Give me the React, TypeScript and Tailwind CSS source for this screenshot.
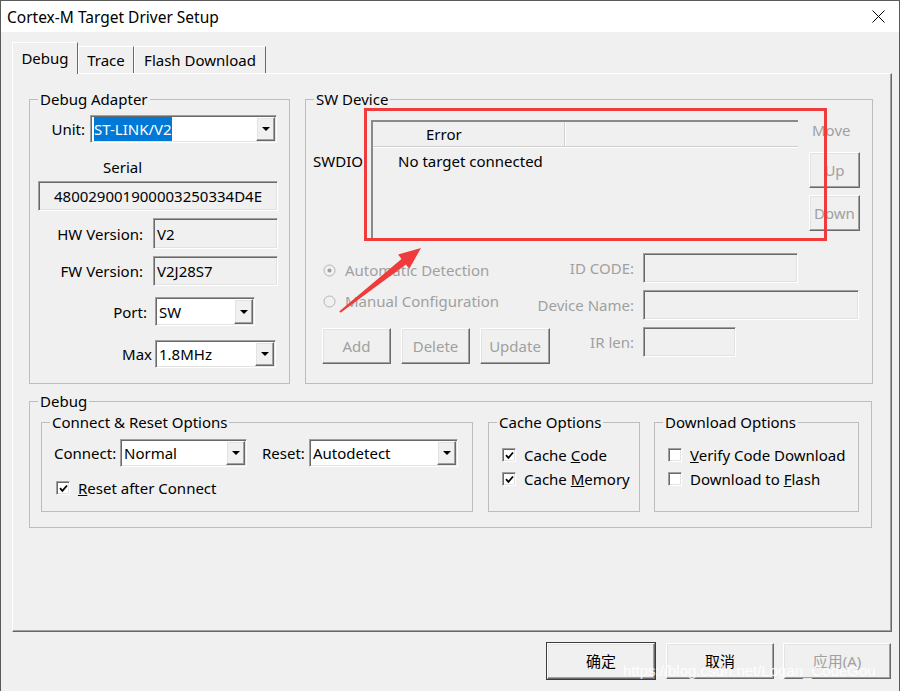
import React from 'react';

const sunken =
  'border border-t-[#a0a0a0] border-l-[#a0a0a0] border-r-white border-b-white shadow-[inset_1px_1px_0_#696969,inset_-1px_-1px_0_#e3e3e3]';
const raised =
  'border border-t-white border-l-white border-r-[#696969] border-b-[#696969] shadow-[inset_-1px_-1px_0_#a0a0a0,inset_1px_1px_0_#e3e3e3]';

const Arrow = () => (
  <svg width="8" height="4" viewBox="0 0 8 4">
    <path d="M0 0h8L4 4z" fill="#000" />
  </svg>
);

const Combo: React.FC<{ className: string; value: string; selected?: boolean }> = ({ className, value, selected }) => (
  <div className={`flex bg-white ${sunken} ${className}`}>
    <div className="flex flex-1 items-stretch py-[1px] pl-[3px]">
      {selected ? (
        <span className="flex items-center bg-[#0078d7] text-white">{value}</span>
      ) : (
        <span className="flex items-center">{value}</span>
      )}
    </div>
    <div className={`my-[1px] mr-[1px] flex w-[19px] items-center justify-center bg-[#f0f0f0] ${raised}`}>
      <Arrow />
    </div>
  </div>
);

const Field: React.FC<{ className: string; children?: React.ReactNode }> = ({ className, children }) => (
  <div className={`flex items-center bg-[#f0f0f0] ${sunken} ${className}`}>{children}</div>
);

const Group: React.FC<{ title: string; className: string; children?: React.ReactNode }> = ({ title, className, children }) => (
  <fieldset className={`border border-[#bdbdbd] ${className}`}>
    <legend className="ml-[8px] px-[2px] leading-[20px]">{title}</legend>
    {children}
  </fieldset>
);

const Check: React.FC<{ checked?: boolean }> = ({ checked }) => (
  <span className={`flex h-[14px] w-[14px] shrink-0 items-center justify-center bg-white ${sunken}`}>
    {checked && (
      <svg width="9" height="9" viewBox="0 0 9 9">
        <path d="M1 4.2l2.4 2.6L8 1.5" stroke="#000" strokeWidth="1.8" fill="none" />
      </svg>
    )}
  </span>
);

const Radio: React.FC<{ on?: boolean }> = ({ on }) => (
  <svg width="13" height="13" viewBox="0 0 13 13" className="shrink-0">
    <circle cx="6.5" cy="6.5" r="5.5" fill="#f0f0f0" stroke="#b4b4b4" />
    {on && <circle cx="6.5" cy="6.5" r="2" fill="#a0a0a0" />}
  </svg>
);

const Btn: React.FC<{ className: string; children: React.ReactNode; dim?: boolean }> = ({ className, children, dim }) => (
  <div className={`flex shrink-0 items-center justify-center bg-[#f0f0f0] ${raised} ${dim ? 'text-[#a0a0a0]' : ''} ${className}`}>
    {children}
  </div>
);

export default function App() {
  return (
    <div className="relative h-[691px] w-[900px] overflow-hidden border-x border-t border-[#5a5a5a] bg-[#f0f0f0] font-['Noto_Sans','Noto_Sans_CJK_SC',sans-serif] text-[15px] leading-[20px] text-black">
      {/* title bar */}
      <div className="flex h-[31px] items-center justify-between bg-white pl-[6px] pr-[14px]">
        <span className="text-[15.5px]">Cortex-M Target Driver Setup</span>
        <svg width="13" height="13" viewBox="0 0 13 13">
          <path d="M0.5 0.5l12 12M12.5 0.5l-12 12" stroke="#000" strokeWidth="1" />
        </svg>
      </div>

      <div className="pl-[11px] pt-[10px]">
        {/* tabs */}
        <div className="flex h-[31px] items-end">
          <div className="relative z-10 -mb-px flex h-[32px] w-[66px] items-center justify-center border-l border-t border-r border-l-white border-t-white border-r-[#696969] bg-[#f0f0f0] pb-[2px]">
            Debug
          </div>
          <div className="flex h-[27px] w-[56px] items-center justify-center border-l border-t border-r border-l-white border-t-white border-r-[#696969]">
            Trace
          </div>
          <div className="flex h-[27px] w-[132px] items-center justify-center border-l border-t border-r border-l-white border-t-white border-r-[#696969]">
            Flash Download
          </div>
        </div>

        {/* tab page */}
        <div className="h-[559px] w-[880px] border border-t-white border-l-white border-r-[#696969] border-b-[#696969] pl-[16px] pt-[15px] shadow-[inset_-1px_-1px_0_#a0a0a0]">
          <div className="flex gap-[15px]">
            <Group title="Debug Adapter" className="h-[295px] w-[261px]">
              <div className="mt-[6px] flex h-[28px] items-center">
                <span className="w-[55px] text-right">Unit:</span>
                <Combo className="ml-[5px] h-[28px] w-[187px]" value="ST-LINK/V2" selected />
              </div>
              <div className="ml-[73px] mt-[14px]">Serial</div>
              <Field className="ml-[8px] mt-[4px] h-[30px] w-[240px] justify-center">480029001900003250334D4E</Field>
              <div className="mt-[7px] flex items-center">
                <span className="w-[113px] text-right">HW Version:</span>
                <Field className="ml-[10px] h-[31px] w-[125px] pl-[3px]">V2</Field>
              </div>
              <div className="mt-[7px] flex items-center">
                <span className="w-[113px] text-right">FW Version:</span>
                <Field className="ml-[10px] h-[30px] w-[125px] pl-[3px]">V2J28S7</Field>
              </div>
              <div className="mt-[11px] flex items-center">
                <span className="w-[117px] text-right">Port:</span>
                <Combo className="ml-[8px] h-[29px] w-[100px]" value="SW" />
              </div>
              <div className="mt-[14px] flex items-center">
                <span className="w-[122px] text-right">Max</span>
                <Combo className="ml-[3px] h-[28px] w-[121px]" value="1.8MHz" />
              </div>
            </Group>

            <Group title="SW Device" className="h-[295px] w-[568px]">
              <div className="mt-[11px] flex items-start">
                <span className="ml-[7px] mt-[31px] w-[58px]">SWDIO</span>
                <div className="h-[120px] w-[427px] border-l-2 border-t-2 border-l-[#8a8a8a] border-t-[#8a8a8a] bg-[#f0f0f0]">
                  <div className="flex h-[25px] border-b border-[#cfcfcf] shadow-[0_1px_0_#fff]">
                    <div className="flex w-[192px] items-center border-r border-[#cfcfcf] pl-[53px] shadow-[1px_0_0_#fff]">Error</div>
                  </div>
                  <div className="ml-[25px] mt-[4px]">No target connected</div>
                </div>
                <div className="ml-[11px] flex w-[51px] flex-col text-[#a0a0a0]">
                  <span className="ml-[3px]">Move</span>
                  <Btn className="mt-[12px] h-[36px]" dim>Up</Btn>
                  <Btn className="mt-[7px] h-[36px]" dim>Down</Btn>
                </div>
              </div>

              <div className="mt-[13px] flex">
                <div className="w-[215px] shrink-0 text-[#a0a0a0]">
                  <div className="ml-[17px] mt-[5px] flex h-[24px] items-center gap-[9px]">
                    <Radio on />
                    <span>Automatic Detection</span>
                  </div>
                  <div className="ml-[17px] mt-[7px] flex h-[24px] items-center gap-[9px]">
                    <Radio />
                    <span>Manual Configuration</span>
                  </div>
                  <div className="ml-[16px] mt-[15px] flex gap-[10px]">
                    <Btn className="h-[36px] w-[69px]" dim>Add</Btn>
                    <Btn className="h-[36px] w-[69px]" dim>Delete</Btn>
                    <Btn className="h-[36px] w-[70px]" dim>Update</Btn>
                  </div>
                </div>
                <div className="flex flex-col gap-[7px] text-[#a0a0a0]">
                  <div className="flex items-center">
                    <span className="w-[113px] text-right">ID CODE:</span>
                    <Field className="ml-[9px] h-[30px] w-[155px]" />
                  </div>
                  <div className="flex items-center">
                    <span className="w-[113px] text-right">Device Name:</span>
                    <Field className="ml-[9px] h-[30px] w-[216px]" />
                  </div>
                  <div className="flex items-center">
                    <span className="w-[113px] text-right">IR len:</span>
                    <Field className="ml-[9px] h-[30px] w-[93px]" />
                  </div>
                </div>
              </div>
            </Group>
          </div>

          <Group title="Debug" className="mt-[7px] h-[137px] w-[843px]">
            <div className="mt-[1px] flex">
              <Group title="Connect & Reset Options" className="ml-[11px] h-[100px] w-[432px]">
                <div className="mt-[7px] flex h-[28px] items-center">
                  <span className="ml-[12px] w-[66px]">Connect:</span>
                  <Combo className="h-[28px] w-[127px]" value="Normal" />
                  <span className="ml-[15px] w-[47px]">Reset:</span>
                  <Combo className="h-[28px] w-[149px]" value="Autodetect" />
                </div>
                <div className="ml-[14px] mt-[11px] flex h-[20px] items-center gap-[8px]">
                  <Check checked />
                  <span><u>R</u>eset after Connect</span>
                </div>
              </Group>
              <Group title="Cache Options" className="ml-[15px] h-[100px] w-[152px]">
                <div className="ml-[13px] mt-[13px] flex h-[20px] items-center gap-[8px]">
                  <Check checked />
                  <span>Cache <u>C</u>ode</span>
                </div>
                <div className="ml-[13px] mt-[4px] flex h-[20px] items-center gap-[8px]">
                  <Check checked />
                  <span>Cache <u>M</u>emory</span>
                </div>
              </Group>
              <Group title="Download Options" className="ml-[14px] h-[100px] w-[205px]">
                <div className="ml-[13px] mt-[13px] flex h-[20px] items-center gap-[8px]">
                  <Check />
                  <span className="whitespace-nowrap"><u>V</u>erify Code Download</span>
                </div>
                <div className="ml-[13px] mt-[4px] flex h-[20px] items-center gap-[8px]">
                  <Check />
                  <span>Download to <u>F</u>lash</span>
                </div>
              </Group>
            </div>
          </Group>
        </div>

        {/* footer buttons */}
        <div className="mt-[11px] flex justify-end pr-[8px]">
          <Btn className="h-[36px] w-[108px] ring-1 ring-[#3c3c3c]">确定</Btn>
          <Btn className="ml-[11px] h-[36px] w-[108px]">取消</Btn>
          <Btn className="ml-[9px] h-[36px] w-[108px]" dim>应用(A)</Btn>
        </div>
      </div>

      {/* annotation overlay */}
      <svg className="pointer-events-none absolute left-0 top-0" width="900" height="691">
        <rect x="364.5" y="108.5" width="460" height="130" fill="none" stroke="#ef3b3b" strokeWidth="3" />
        <polygon
          points="338.4,310.2 400.5,257.9 397.1,253.6 420,247 408.3,267.8 404.9,263.5 339.6,311.8"
          fill="#ef3b3b"
        />
      </svg>
      <span className="pointer-events-none absolute left-[622px] top-[660px] font-['Liberation_Sans',sans-serif] text-[15px] text-white/85">
        https://blog.csdn.net/Logan_CodeGou
      </span>
    </div>
  );
}
